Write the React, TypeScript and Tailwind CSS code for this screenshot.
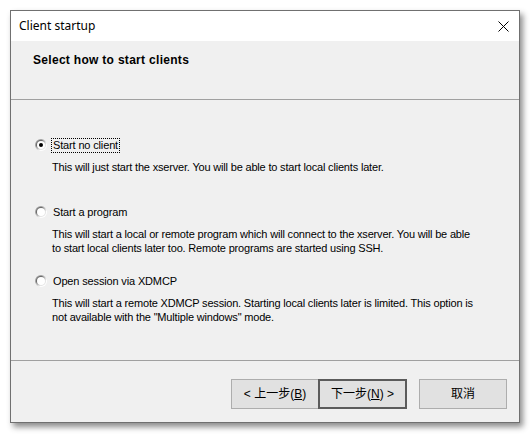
import React, { useState } from 'react';

const FONT = '"Liberation Sans", "Noto Sans CJK SC", sans-serif';

const options = [
  {
    id: 'none',
    label: 'Start no client',
    height: 'h-[67px]',
    desc: ['This will just start the xserver. You will be able to start local clients later.'],
  },
  {
    id: 'program',
    label: 'Start a program',
    height: 'h-[69px]',
    desc: [
      'This will start a local or remote program which will connect to the xserver. You will be able',
      'to start local clients later too. Remote programs are started using SSH.',
    ],
  },
  {
    id: 'xdmcp',
    label: 'Open session via XDMCP',
    height: 'h-[60px]',
    desc: [
      'This will start a remote XDMCP session. Starting local clients later is limited. This option is',
      'not available with the "Multiple windows" mode.',
    ],
  },
];

const Radio = ({ checked }: { checked: boolean }) => (
  <svg width="12" height="12" viewBox="0 0 12 12" className="shrink-0">
    <defs>
      <linearGradient id="rbOuter" x1="0" y1="0" x2="1" y2="1">
        <stop offset="0.3" stopColor="#a0a0a0" />
        <stop offset="0.7" stopColor="#ffffff" />
      </linearGradient>
      <linearGradient id="rbInner" x1="0" y1="0" x2="1" y2="1">
        <stop offset="0.3" stopColor="#696969" />
        <stop offset="0.7" stopColor="#e3e3e3" />
      </linearGradient>
    </defs>
    <circle cx="6" cy="6" r="6" fill="url(#rbOuter)" />
    <circle cx="6" cy="6" r="5" fill="url(#rbInner)" />
    <circle cx="6" cy="6" r="4" fill="#ffffff" />
    {checked && <circle cx="6" cy="6" r="2" fill="#000" />}
  </svg>
);

const Button = ({ children, primary }: { children: React.ReactNode; primary?: boolean }) => (
  <button
    className={`h-[30px] flex items-center justify-center text-[12px] text-black bg-[#e1e1e1] ${
      primary ? 'w-[89px] -ml-px border-2 border-[#5b5b5b]' : 'w-[88px] border border-[#adadad]'
    }`}
    style={{ fontFamily: FONT }}
  >
    {children}
  </button>
);

export default function App() {
  const [selected, setSelected] = useState('none');

  return (
    <div className="w-[531px] h-[435px] bg-white pl-[10px] pt-[10px]" style={{ fontFamily: FONT }}>
      <div className="w-[510px] h-[413px] flex flex-col border border-[#707070] bg-[#f0f0f0] shadow-[3px_4px_6px_rgba(0,0,0,0.45)]">
        <div className="h-[30px] bg-white flex items-center justify-between pl-2 pr-[10px] shrink-0">
          <span className="text-[12px] text-black" style={{ fontFamily: '"Noto Sans", "Liberation Sans", sans-serif' }}>
            Client startup
          </span>
          <svg width="11" height="11" viewBox="0 0 11 11">
            <path d="M0.5 0.5 L10.5 10.5 M10.5 0.5 L0.5 10.5" stroke="#000" strokeWidth="1" />
          </svg>
        </div>
        <div className="h-[59px] shrink-0 border-b border-[#a0a0a0] pl-[22px] pt-[10px]">
          <h1 className="text-[12px] font-bold text-black tracking-[0.3px]">Select how to start clients</h1>
        </div>
        <div className="flex-1 border-b border-[#a0a0a0] pl-[24px] pt-[38px] flex flex-col">
          {options.map((o) => (
            <div key={o.id} className={`${o.height} flex flex-col`}>
              <label className="h-[14px] flex items-center gap-[5px] cursor-default" onClick={() => setSelected(o.id)}>
                <Radio checked={selected === o.id} />
                <span
                  className={`text-[11px] leading-[13px] text-black px-px tracking-[-0.15px] ${
                    selected === o.id ? 'outline outline-1 outline-dotted outline-black' : ''
                  }`}
                >
                  {o.label}
                </span>
              </label>
              <div className="mt-[8px] pl-[17px] text-[11px] leading-[14px] text-black tracking-[-0.18px]">
                {o.desc.map((d) => (
                  <div key={d}>{d}</div>
                ))}
              </div>
            </div>
          ))}
        </div>
        <div className="h-[61px] shrink-0 flex items-start pt-[18px] pl-[220px]">
          <Button>
            &lt; 上一步(<u>B</u>)
          </Button>
          <Button primary>
            下一步(<u>N</u>) &gt;
          </Button>
          <div className="w-[12px]" />
          <Button>取消</Button>
        </div>
      </div>
    </div>
  );
}
